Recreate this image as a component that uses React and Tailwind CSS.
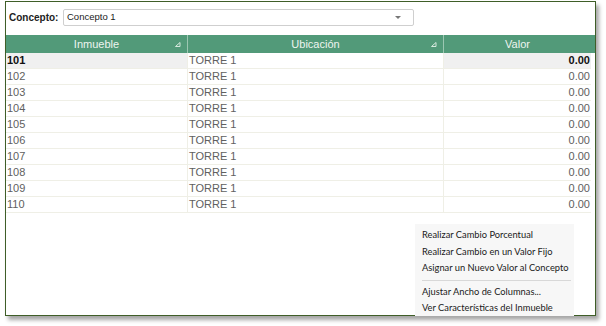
import React from 'react';

const rows = ['101', '102', '103', '104', '105', '106', '107', '108', '109', '110'];

const SortMark = () => (
  <svg width="6" height="5" viewBox="0 0 6 5" className="absolute right-[6px] top-[7px]">
    <path d="M5 0.5 L5 4.5 L0.5 4.5 Z" fill="none" stroke="#d6e9de" strokeWidth="1" />
  </svg>
);

const menuItem = 'h-[16.5px] flex items-center pl-[7px] whitespace-nowrap';

const App = () => {
  return (
    <div className="w-[606px] h-[326px] bg-white pt-[1px] pl-[5px]" style={{ fontFamily: '"Liberation Sans", Arial, sans-serif' }}>
      <div className="relative w-[591px] h-[315px] border border-[#3f5e28] bg-white shadow-[3px_4px_4px_rgba(0,0,0,0.35)]">
        {/* Concepto */}
        <div className="flex items-center h-[31px] pl-[3px]">
          <span className="text-[10px] font-bold text-[#222] w-[54px]">Concepto:</span>
          <div className="relative w-[351px] h-[17px] border border-[#cfcfcf] rounded-[2px] flex items-center pl-[3px] text-[9.5px] text-[#222]">
            Concepto 1
            <svg width="6" height="4" viewBox="0 0 6 4" className="absolute right-[12px] top-[6px]">
              <path d="M0 0 L6 0 L3 3 Z" fill="#777" />
            </svg>
          </div>
        </div>
        <div className="h-[2px]" />

        {/* Grid */}
        <div className="flex h-[18px] bg-[#529a79] text-[11px] text-[#eef5f0]">
          <div className="relative w-[182px] flex items-center justify-center border-r border-[#9cc7b2]">
            Inmueble
            <SortMark />
          </div>
          <div className="relative w-[256px] flex items-center justify-center border-r border-[#9cc7b2]">
            Ubicación
            <SortMark />
          </div>
          <div className="w-[147px] flex items-center justify-center mr-[4px]">Valor</div>
        </div>
        {rows.map((r, i) => {
          const sel = i === 0;
          return (
            <div key={r} className="flex h-[16px] text-[11px] border-b border-[#efefe6] mr-[4px]">
              <div className={`w-[182px] flex items-center pl-[1px] border-r border-[#efefe6] ${sel ? 'bg-[#f0f0f0] font-bold text-[#111]' : 'text-[#606060]'}`}>
                {r}
              </div>
              <div className="w-[256px] flex items-center pl-[1px] border-r border-[#efefe6] text-[#606060]">TORRE 1</div>
              <div className={`flex-1 flex items-center justify-end pr-[1px] ${sel ? 'bg-[#f0f0f0] font-bold text-[#111]' : 'text-[#606060]'}`}>
                0.00
              </div>
            </div>
          );
        })}

        {/* Context menu */}
        <div className="absolute left-[409px] top-[222px] w-[159px] h-[92px] bg-[#f7f7f7] pt-[3px] text-[9.3px] text-[#1a1a1a]" style={{ fontFamily: 'Lato, "Liberation Sans", sans-serif' }}>
          <div className={menuItem}>Realizar Cambio Porcentual</div>
          <div className={menuItem}>Realizar Cambio en un Valor Fijo</div>
          <div className={menuItem}>Asignar un Nuevo Valor al Concepto</div>
          <div className="h-[7px] flex items-center pl-[7px] pr-[3px]">
            <div className="w-full h-px bg-[#d8d8d8]" />
          </div>
          <div className={menuItem}>Ajustar Ancho de Columnas...</div>
          <div className={menuItem}>Ver Características del Inmueble</div>
        </div>
      </div>
    </div>
  );
};

export default App;
